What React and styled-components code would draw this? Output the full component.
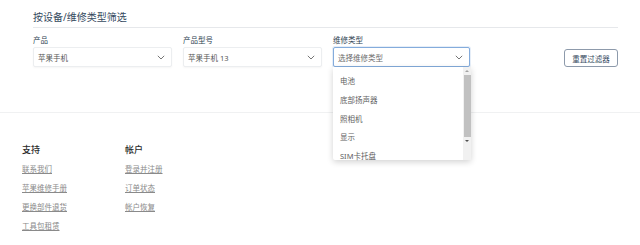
import React from 'react';
import styled, {createGlobalStyle} from "styled-components";

const FONT = `"Noto Sans", "Noto Sans CJK SC", sans-serif`

const GlobalStyle = createGlobalStyle`
    body {
        margin: 0;
        background: #ffffff;
        font-family: ${FONT};
    }
`

const repairTypes = ['电池', '底部扬声器', '照相机', '显示', 'SIM卡托盘']

const supportLinks = ['联系我们', '苹果维修手册', '更换部件退货', '工具包租赁']
const accountLinks = ['登录并注册', '订单状态', '帐户恢复']

function Chevron() {
    return (
        <svg width="8" height="5" viewBox="0 0 8 5" fill="none">
            <path d="M0.8 0.8 L4 4 L7.2 0.8" stroke="#666" strokeWidth="0.9"/>
        </svg>
    )
}

function Select(props) {
    const {value, placeholder, focused, width, children} = props

    return (
        <SelectWrap>
            <SelectBox $focused={focused} $width={width}>
                <SelectText $placeholder={!value}>{value || placeholder}</SelectText>
                <Chevron/>
            </SelectBox>
            {children}
        </SelectWrap>
    )
}

function App() {
    return (
        <Page>
            <GlobalStyle/>
            <Filters>
                <Heading>按设备/维修类型筛选</Heading>
                <FilterRow>
                    <Field>
                        <Label>产品</Label>
                        <Select value="苹果手机" width={139}/>
                    </Field>
                    <Field>
                        <Label>产品型号</Label>
                        <Select value="苹果手机 13" width={139}/>
                    </Field>
                    <Field>
                        <Label>维修类型</Label>
                        <Select placeholder="选择维修类型" focused width={137}>
                            <Dropdown>
                                <OptionList>
                                    {
                                        repairTypes.map((item, id) => (
                                            <Option key={id}>{item}</Option>
                                        ))
                                    }
                                </OptionList>
                                <ScrollTrack>
                                    <ScrollArrow $down={false}/>
                                    <ScrollThumb/>
                                    <ScrollArrow $down/>
                                </ScrollTrack>
                            </Dropdown>
                        </Select>
                    </Field>
                    <ResetButton>重置过滤器</ResetButton>
                </FilterRow>
            </Filters>

            <Footer>
                <FooterColumn>
                    <FooterTitle>支持</FooterTitle>
                    {supportLinks.map((link, id) => <FooterLink key={id} href="#">{link}</FooterLink>)}
                </FooterColumn>
                <FooterColumn>
                    <FooterTitle>帐户</FooterTitle>
                    {accountLinks.map((link, id) => <FooterLink key={id} href="#">{link}</FooterLink>)}
                </FooterColumn>
            </Footer>
        </Page>
    );
}

const Page = styled.div`
    width: 640px;
    height: 245px;
    overflow: hidden;
`

const Filters = styled.section`
    margin: 0 22px 0 33px;
    padding-top: 10px;
    height: 112px;
    box-sizing: border-box;
`

const Heading = styled.h2`
    margin: 0;
    padding-bottom: 3px;
    font-size: 10px;
    line-height: 14px;
    font-weight: 400;
    color: #34495e;
    border-bottom: 1px solid #e6e8eb;
`

const FilterRow = styled.div`
    display: grid;
    grid-template-columns: 139px 139px 137px 1fr;
    column-gap: 11px;
    align-items: end;
    margin-top: 7px;
`

const Field = styled.div`
    display: flex;
    flex-direction: column;
    gap: 2px;
`

const Label = styled.label`
    font-size: 7.5px;
    line-height: 10px;
    color: #2c3e50;
`

const SelectWrap = styled.div`
    position: relative;
`

const SelectBox = styled.div`
    width: ${p => p.$width}px;
    height: 20px;
    box-sizing: border-box;
    display: flex;
    align-items: center;
    justify-content: space-between;
    padding: 0 6px 0 4px;
    border: 1px solid ${p => p.$focused ? '#84acdc' : '#eceef0'};
    border-radius: 2px;
    background: #fff;
    box-shadow: ${p => p.$focused ? '0 0 0 1px rgba(132,172,220,.2)' : '0 1px 2px rgba(0,0,0,.04)'};
`

const SelectText = styled.span`
    font-size: 7.5px;
    color: ${p => p.$placeholder ? '#6b6b6b' : '#555'};
`

const Dropdown = styled.div`
    position: absolute;
    top: 100%;
    left: 0;
    width: 138px;
    height: 93px;
    background: #fff;
    box-shadow: 0 2px 6px rgba(0, 0, 0, .18);
    border-radius: 0 0 2px 2px;
    z-index: 10;
    display: flex;
`

const OptionList = styled.ul`
    flex: 1;
    list-style: none;
    margin: 0;
    padding: 5px 0 0;
`

const Option = styled.li`
    height: 18.75px;
    line-height: 18.75px;
    padding-left: 7px;
    font-size: 7.5px;
    color: #5f5f5f;
    white-space: nowrap;
`

const ScrollTrack = styled.div`
    width: 8px;
    display: flex;
    flex-direction: column;
    align-items: center;
    background: #f1f1f1;
`

const ScrollArrow = styled.div`
    width: 0;
    height: 0;
    margin: 3px 0;
    border-left: 2px solid transparent;
    border-right: 2px solid transparent;
    ${p => p.$down
            ? 'border-top: 2px solid #505050;'
            : 'border-bottom: 2px solid #a3a3a3;'}
`

const ScrollThumb = styled.div`
    width: 7px;
    height: 62px;
    background: #c1c1c1;
`

const ResetButton = styled.button`
    justify-self: end;
    width: 54px;
    height: 18px;
    padding: 0;
    border: 1px solid #8d9aab;
    border-radius: 3px;
    background: #fff;
    font-family: ${FONT};
    font-size: 7.5px;
    color: #34495e;
`

const Footer = styled.footer`
    display: flex;
    border-top: 1px solid #f0f1f2;
    padding: 29px 0 0 22px;
`

const FooterColumn = styled.div`
    width: 103px;
    display: flex;
    flex-direction: column;
`

const FooterTitle = styled.h4`
    margin: 0 0 2px;
    font-size: 9px;
    line-height: 16px;
    font-weight: 500;
    color: #2a2a2a;
`

const FooterLink = styled.a`
    font-size: 7.5px;
    line-height: 19px;
    color: #8a8a8a;
    text-decoration: underline;
    width: fit-content;
`

export default App;
